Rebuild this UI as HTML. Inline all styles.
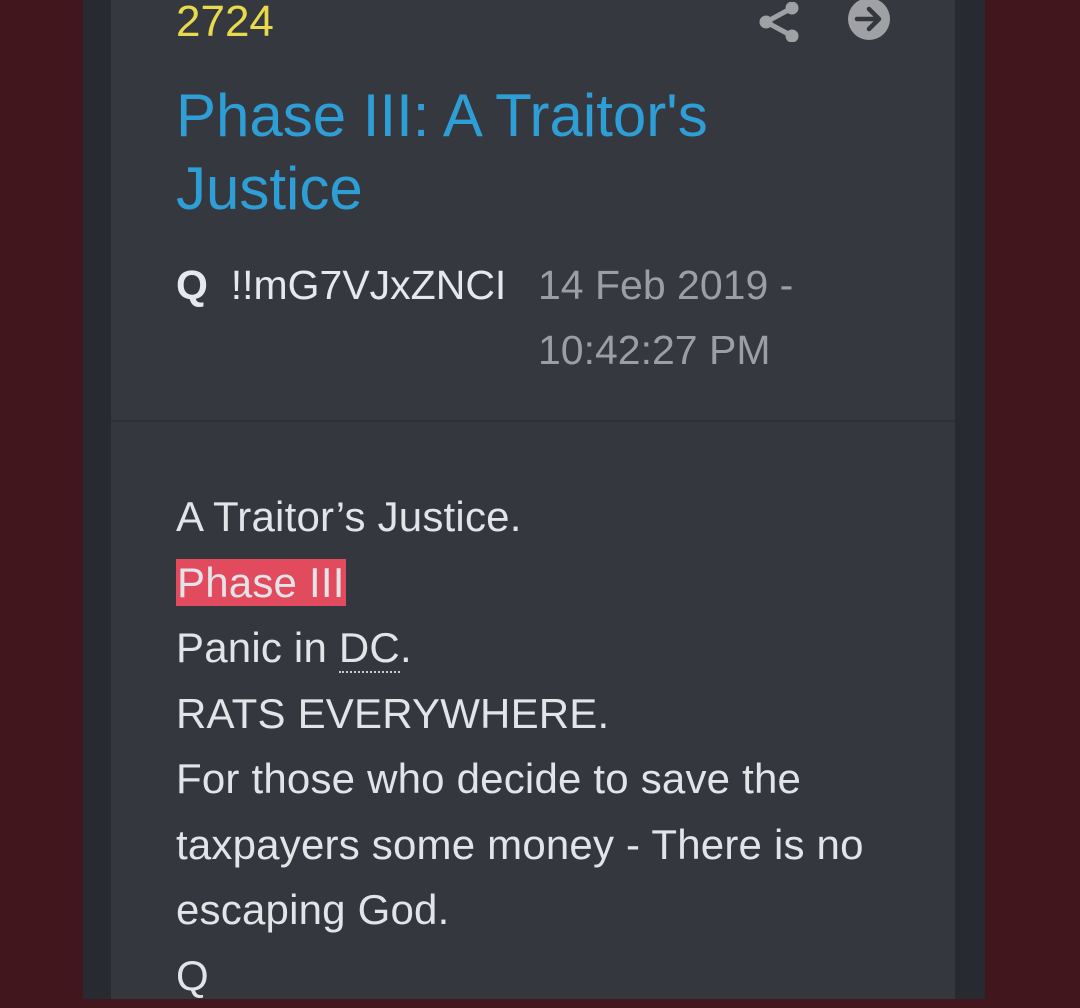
<!DOCTYPE html>
<html><head><style>
html,body{margin:0;padding:0;width:1080px;height:999px;overflow:hidden;background:#42161d;font-family:"Liberation Sans",Arial,sans-serif}
.outer{position:absolute;left:83px;top:0;width:902px;height:999px;background:#272a31}
.card{position:absolute;left:111px;top:0;width:844px;height:999px;background:#35373e}
.head{position:absolute;left:0;top:0;width:844px;height:420px;background:#36383f;border-bottom:2px solid #2d2f35}
.num{position:absolute;left:65px;top:-3px;font-size:44px;color:#e8da4c}
.title{position:absolute;left:65px;top:79px;font-size:60px;line-height:73px;color:#2e9fd6}
.meta{position:absolute;left:65px;top:253px;font-size:41px;line-height:65px;color:#e6e8ec}
.date{position:absolute;left:427px;top:253px;font-size:41px;line-height:65px;color:#9c9ea3}
.body{position:absolute;left:65px;top:484px;font-size:42px;line-height:65.5px;color:#e2e4e8;letter-spacing:0.2px}
.hl{background:#e24a5e;padding:0 1px}
.dc{border-bottom:2px dotted #ccc}
</style></head><body>
<div class="outer"></div>
<div class="card">
<div class="head">
<div class="num">2724</div>
<svg style="position:absolute;left:647px;top:2px" width="42" height="40" viewBox="0 0 42 40"><g fill="#a0a1a4"><circle cx="34" cy="6" r="6.5"/><circle cx="8" cy="20" r="6.5"/><circle cx="34" cy="34" r="6.5"/></g><path d="M34 6 L8 20 L34 34" stroke="#a0a1a4" stroke-width="5" fill="none"/></svg>
<svg style="position:absolute;left:736px;top:0px" width="44" height="42" viewBox="0 0 44 42"><circle cx="22" cy="19" r="21" fill="#a0a1a4"/><path d="M10 19 H32 M22 9 L32 19 L22 29" stroke="#35373e" stroke-width="4.5" fill="none" stroke-linecap="round" stroke-linejoin="round"/></svg>
<div class="title">Phase III: A Traitor's<br>Justice</div>
<div class="meta"><b>Q</b>&nbsp; !!mG7VJxZNCI</div>
<div class="date">14 Feb 2019 -<br>10:42:27 PM</div>
</div>
<div class="body">A Traitor’s Justice.<br><span class="hl">Phase III</span><br>Panic in <span class="dc">DC</span>.<br>RATS EVERYWHERE.<br>For those who decide to save the<br>taxpayers some money - There is no<br>escaping God.<br>Q</div>
</div>
</body></html>
